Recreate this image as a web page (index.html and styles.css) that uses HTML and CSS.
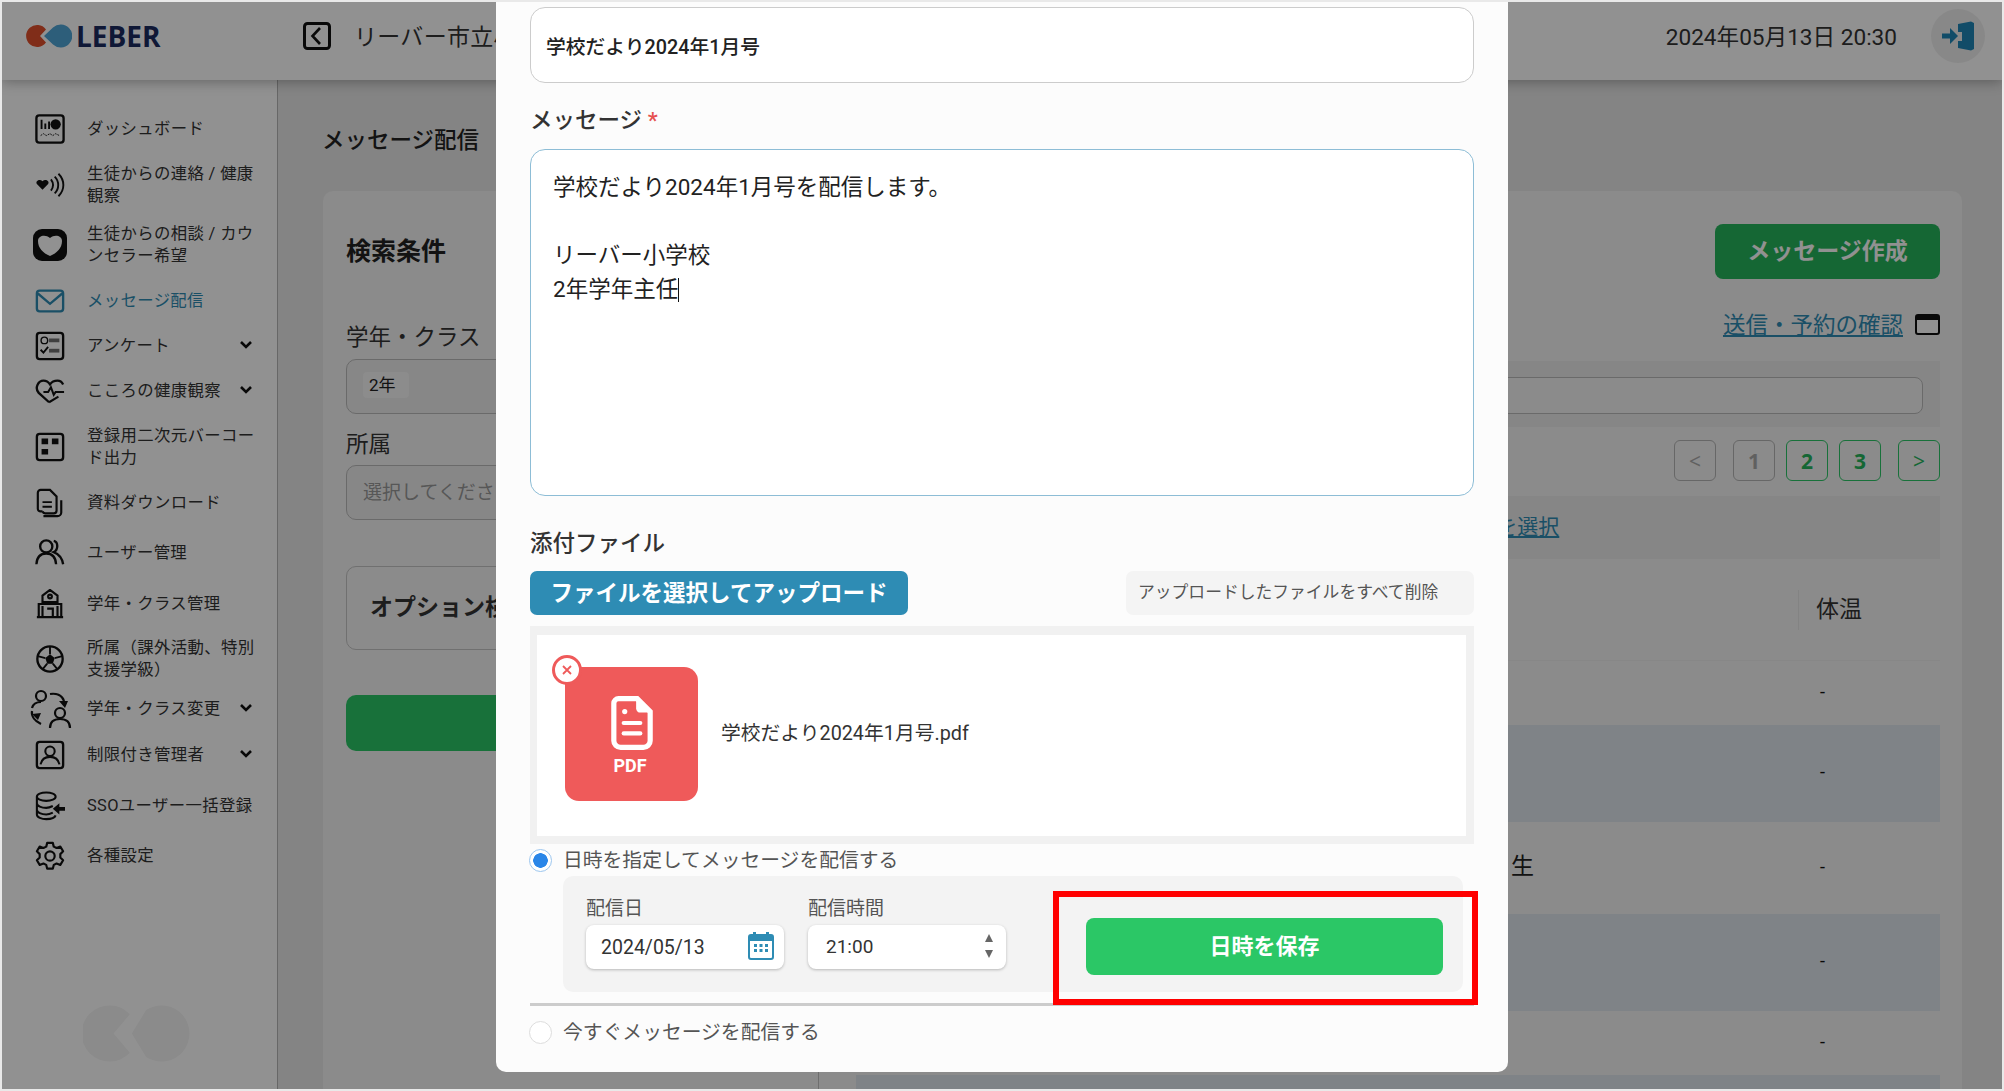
FILE: index.html
```html
<!DOCTYPE html>
<html lang="ja">
<head>
<meta charset="utf-8">
<title>メッセージ配信</title>
<link rel="stylesheet" href="styles.css">
</head>
<body>
<div class="app">
  <header class="topbar">
    <div class="brand">
      <svg class="brand-mark" viewBox="0 0 46 24"><path d="M20 5.500A11 11 0 1 0 20 18.500L14 12Z" fill="#e2502c"/><path d="M18 12 27 3.500A11.500 11.500 0 1 1 27 20.500Z" fill="#4fa5d6"/></svg>
      <span class="brand-name">LEBER</span>
    </div>
    <svg class="back-icon" viewBox="0 0 28 28"><rect x="1.500" y="1.500" width="25" height="25" rx="3" fill="none" stroke="#111" stroke-width="3"/><path d="M17 6 9.500 14 17 22" fill="none" stroke="#111" stroke-width="2.600"/></svg>
    <span class="school">リーバー市立小学校</span>
    <span class="clock">2024年05月13日 20:30</span>
    <span class="logout">
      <svg viewBox="0 0 32 30" width="32" height="30"><path d="M16 3 29 0.500 32 2V28L29 29.500 16 27V20H20V11H16Z" fill="#1f86b8"/><path d="M0 12.500H8V7L16 15 8 23V17.500H0Z" fill="#1f86b8"/></svg>
    </span>
  </header>

  <nav class="sidebar">
    <ul class="nav">
      <li class="nav-item"><svg class="nav-icon" viewBox="0 0 32 32"><rect x="1.500" y="1.500" width="29" height="29" rx="3" fill="none" stroke="#111" stroke-width="2.500"/><path d="M6 6h2v10H6zM10 10h2v6h-2zM14 8h2v8h-2z" fill="#111"/><circle cx="22" cy="11" r="5.500" fill="#111"/><path d="M6 23l3-2 3 2 4-2 3 2 3-2 4 2" fill="none" stroke="#111" stroke-dasharray="2 1"/></svg><span>ダッシュボード</span></li>
      <li class="nav-item two"><svg class="nav-icon" viewBox="0 0 32 32"><path d="M8 22 2 16c-2-3 3-6 6-3 3-3 8 0 6 3Z" fill="#111" transform="translate(0 -1)"/><path d="M17 10c3 4 3 8 0 12M21 7c5 5 5 13 0 18M25 4c7 7 7 17 0 24" fill="none" stroke="#111" stroke-width="2"/></svg><span>生徒からの連絡 / 健康<br>観察</span></li>
      <li class="nav-item two"><svg class="nav-icon wide" viewBox="0 0 34 32"><rect y="0" width="34" height="32" rx="9" fill="#111"/><path d="M17 27C10 24 5 19 5 12 5 7 12 5 17 9 22 5 29 7 29 12 29 19 24 24 17 27Z" fill="#fff"/></svg><span>生徒からの相談 / カウ<br>ンセラー希望</span></li>
      <li class="nav-item active"><svg class="nav-icon" viewBox="0 0 32 32"><rect x="2" y="5" width="28" height="22" rx="3" fill="none" stroke="#2e8cb4" stroke-width="2.500"/><path d="M3 8 16 19 29 8" fill="none" stroke="#2e8cb4" stroke-width="2.500"/></svg><span>メッセージ配信</span></li>
      <li class="nav-item"><svg class="nav-icon" viewBox="0 0 32 32"><rect x="2" y="2" width="28" height="28" rx="3" fill="none" stroke="#111" stroke-width="2.500"/><circle cx="10" cy="10" r="3.500" fill="none" stroke="#111" stroke-width="1.500"/><rect x="15" y="8" width="11" height="4" fill="#111" opacity=".6"/><path d="M6 20l3 3 5-6" fill="none" stroke="#111" stroke-width="2"/><rect x="15" y="19" width="11" height="4" fill="#111" opacity=".6"/></svg><span>アンケート</span><svg class="chev" viewBox="0 0 14 10"><path d="M2 2 7 7 12 2" fill="none" stroke="#111" stroke-width="2.600"/></svg></li>
      <li class="nav-item"><svg class="nav-icon" viewBox="0 0 32 32"><path d="M15 28 4 18C-1 12 4 5 9 5c3 0 5 1 7 4 2-3 5-4 8-4 3 0 5 2 6 4" fill="none" stroke="#111" stroke-width="2.500"/><path d="M9 17h5l3-5 3 8 2-3h9M25 22l-10 6" fill="none" stroke="#111" stroke-width="2.200"/></svg><span>こころの健康観察</span><svg class="chev" viewBox="0 0 14 10"><path d="M2 2 7 7 12 2" fill="none" stroke="#111" stroke-width="2.600"/></svg></li>
      <li class="nav-item two"><svg class="nav-icon" viewBox="0 0 32 32"><rect x="2" y="2" width="28" height="28" rx="3" fill="none" stroke="#111" stroke-width="2.500"/><path d="M7 7h7v6H7zM18 7h7v6h-7zM7 18h7v6H7z" fill="#111"/></svg><span>登録用二次元バーコー<br>ド出力</span></li>
      <li class="nav-item"><svg class="nav-icon" viewBox="0 0 32 32"><path d="M8 25H6a3 3 0 0 1-3-3V5a3 3 0 0 1 3-3h10l7 7v15a3 3 0 0 1-3 3H11a3 3 0 0 1-3-2" fill="none" stroke="#111" stroke-width="2.300"/><path d="M8 15h10M8 20h10" stroke="#111" stroke-width="2"/><path d="M9 30h15a4 4 0 0 0 4-4V13" fill="none" stroke="#111" stroke-width="2.300"/></svg><span>資料ダウンロード</span></li>
      <li class="nav-item"><svg class="nav-icon" viewBox="0 0 32 32"><circle cx="12" cy="9" r="6.500" fill="none" stroke="#111" stroke-width="2.500"/><path d="M1.500 28C2 20 6 16.500 12 16.500S22 20 22.500 28M20 3c5 1 5 10 0 12 5 2 9 6 10 13" fill="none" stroke="#111" stroke-width="2.500"/></svg><span>ユーザー管理</span></li>
      <li class="nav-item"><svg class="nav-icon" viewBox="0 0 32 32"><path d="M16 1 8 7V14H24V7ZM2 30H30M4 30V16H28V30M8 18V30M13 21H19V30M24 18V30M14 8a2 2 0 1 0 4 0 2 2 0 1 0-4 0" fill="none" stroke="#111" stroke-width="2.300"/></svg><span>学年・クラス管理</span></li>
      <li class="nav-item two"><svg class="nav-icon" viewBox="0 0 32 32"><circle cx="16" cy="16" r="13.500" fill="none" stroke="#111" stroke-width="2.500"/><path d="M16 11l5 4-2 6h-6l-2-6Z" fill="#111"/><path d="M16 3v8M3 13l8 2M29 13l-8 2M8 27l5-6M24 27l-5-6" stroke="#111" stroke-width="2"/></svg><span>所属（課外活動、特別<br>支援学級）</span></li>
      <li class="nav-item"><svg class="nav-icon large" viewBox="0 0 42 40"><circle cx="11" cy="7" r="5" fill="none" stroke="#111" stroke-width="2.200"/><path d="M2 19c1-4 4-6 9-6M2 22c-1 5 3 10 9 13" fill="none" stroke="#111" stroke-width="2.200"/><circle cx="30" cy="24" r="5" fill="none" stroke="#111" stroke-width="2.200"/><path d="M20 39c0-6 4-9 10-9s10 3 10 9M20 5c6-1 12 1 14 7" fill="none" stroke="#111" stroke-width="2.200"/><path d="M29 12h9l-3 7ZM2 25l9-1-3 7Z" fill="#111"/></svg><span>学年・クラス変更</span><svg class="chev" viewBox="0 0 14 10"><path d="M2 2 7 7 12 2" fill="none" stroke="#111" stroke-width="2.600"/></svg></li>
      <li class="nav-item"><svg class="nav-icon" viewBox="0 0 32 32"><rect x="2" y="2" width="28" height="28" rx="3" fill="none" stroke="#111" stroke-width="2.500"/><circle cx="16" cy="12" r="5" fill="none" stroke="#111" stroke-width="2.200"/><path d="M6 26c1-5 5-8 10-8s9 3 10 8" fill="none" stroke="#111" stroke-width="2.200"/></svg><span>制限付き管理者</span><svg class="chev" viewBox="0 0 14 10"><path d="M2 2 7 7 12 2" fill="none" stroke="#111" stroke-width="2.600"/></svg></li>
      <li class="nav-item"><svg class="nav-icon" viewBox="0 0 32 32"><ellipse cx="12" cy="6" rx="10" ry="4.500" fill="none" stroke="#111" stroke-width="2.200"/><path d="M2 6v19c0 3 5 5 10 5s9-1 10-4M2 13c0 3 5 5 10 5 3 0 5-1 7-2M2 20c0 3 5 5 10 5 3 0 5-1 7-2" fill="none" stroke="#111" stroke-width="2.200"/><path d="M32 17h-6v-4l-7 6 7 6v-4h6Z" fill="#111"/></svg><span>SSOユーザー一括登録</span></li>
      <li class="nav-item"><svg class="nav-icon" viewBox="0 0 32 32"><path d="M13 2h6l1 4 3 1.500 4-1.500 3 5-3 3v3.500l3 3-3 5-4-1.500-3 1.500-1 4h-6l-1-4-3-1.500-4 1.500-3-5 3-3V14l-3-3 3-5 4 1.500L12 6Z" fill="none" stroke="#111" stroke-width="2.300" stroke-linejoin="round"/><circle cx="16" cy="16" r="5" fill="none" stroke="#111" stroke-width="2.300"/></svg><span>各種設定</span></li>
    </ul>
    <svg class="watermark" viewBox="0 0 110 56"><path d="M46 9A27.500 27.500 0 1 0 46 47L30 28Z" fill="#f4f4f4"/><path d="M48 28 62 5A27.500 27.500 0 1 1 62 51Z" fill="#f4f4f4"/></svg>
  </nav>

  <main class="main">
    <h1 class="page-title">メッセージ配信</h1>
    <section class="card">
      <div class="search">
        <h2 class="search-title">検索条件</h2>
        <div class="field-label first">学年・クラス</div>
        <div class="select"><span class="tag">2年</span></div>
        <div class="field-label">所属</div>
        <div class="select select-near"><span class="placeholder">選択してください</span></div>
        <div class="option-box">オプション検索</div>
        <div class="search-btn"></div>
      </div>
      <div class="results">
        <div class="create-btn">メッセージ作成</div>
        <div class="link-row">
          <a class="link">送信・予約の確認</a>
          <svg class="window-icon" viewBox="0 0 25 21"><rect x="1" y="1" width="23" height="19" rx="2" fill="#fff" stroke="#111" stroke-width="2"/><rect x="1" y="1" width="23" height="5" fill="#111"/></svg>
        </div>
        <div class="band band-search"><div class="search-input"></div></div>
        <div class="pager">
          <span class="page off">&lt;</span>
          <span class="page off num first-num">1</span>
          <span class="page on num">2</span>
          <span class="page on num">3</span>
          <span class="page on next">&gt;</span>
        </div>
        <div class="band band-select"><a class="link select-all">すべてを選択</a></div>
        <div class="thead"><span class="th-sep"></span><span class="th">体温</span></div>
        <div class="row r1"><span class="dash">-</span></div>
        <div class="row r2 tint"><span class="dash">-</span></div>
        <div class="row r3"><span class="name">生</span><span class="dash">-</span></div>
        <div class="row r2 tint"><span class="dash">-</span></div>
        <div class="row r5"><span class="dash">-</span></div>
        <div class="row r6 tint"></div>
      </div>
    </section>
  </main>

  <div class="overlay"></div>

  <div class="modal">
    <div class="title-input">学校だより2024年1月号</div>
    <div class="modal-label msg-label">メッセージ <span class="req">*</span></div>
    <div class="textarea">
      <div>学校だより2024年1月号を配信します。</div>
      <div>&nbsp;</div>
      <div>リーバー小学校</div>
      <div>2年学年主任<span class="caret"></span></div>
    </div>
    <div class="modal-label attach-label">添付ファイル</div>
    <div class="attach-row">
      <span class="upload-btn">ファイルを選択してアップロード</span>
      <span class="clear-btn">アップロードしたファイルをすべて削除</span>
    </div>
    <div class="file-box">
      <div class="file-inner">
        <div class="tile">
          <span class="remove"><svg viewBox="0 0 12 12" width="12" height="12"><path d="M2 2 10 10M10 2 2 10" stroke="#ef5a5a" stroke-width="1.800"/></svg></span>
          <svg class="doc" viewBox="0 0 40 52"><path d="M7 2.500H25L37.500 15V43A6.500 6.500 0 0 1 31 49.500H9A6.500 6.500 0 0 1 2.500 43V7A4.500 4.500 0 0 1 7 2.500Z" fill="none" stroke="#fff" stroke-width="5"/><path d="M24 3 37 16H28a4 4 0 0 1-4-4Z" fill="#fff"/><circle cx="13" cy="15" r="2.500" fill="#fff"/><rect x="10" y="24" width="20" height="4" rx="2" fill="#fff"/><rect x="10" y="34" width="20" height="4" rx="2" fill="#fff"/></svg>
          <span class="pdf">PDF</span>
        </div>
        <span class="file-name">学校だより2024年1月号.pdf</span>
      </div>
    </div>
    <div class="radio-row first-radio"><span class="radio checked"></span><span>日時を指定してメッセージを配信する</span></div>
    <div class="schedule">
      <div class="sched-field">
        <div class="sched-label">配信日</div>
        <div class="sched-input">
          <span>2024/05/13</span>
          <svg class="cal" viewBox="0 0 26 28"><path d="M5 0h3v4H5zM18 0h3v4h-3z" fill="#2e8cb4"/><rect x="1" y="3" width="24" height="24" rx="2" fill="#fff" stroke="#2e8cb4" stroke-width="2"/><rect x="1" y="3" width="24" height="6" fill="#2e8cb4"/><path d="M6 12h3v3H6zM11.500 12h3v3h-3zM17 12h3v3h-3zM6 17h3v3H6zM11.500 17h3v3h-3zM17 17h3v3h-3z" fill="#2e8cb4"/></svg>
        </div>
      </div>
      <div class="sched-field">
        <div class="sched-label">配信時間</div>
        <div class="sched-input time">
          <span>21:00</span>
          <span class="spin"><i class="up"></i><i class="down"></i></span>
        </div>
      </div>
      <div class="save-btn">日時を保存</div>
    </div>
    <div class="divider"></div>
    <div class="radio-row second-radio"><span class="radio"></span><span>今すぐメッセージを配信する</span></div>
    <div class="highlight"></div>
  </div>
</div>
</body>
</html>
```

FILE: styles.css
```css
* { box-sizing: border-box; }
html, body { margin: 0; height: 100%; }
body {
  background: #e9e9e9;
  padding: 2px;
  font-family: Roboto, "Noto Sans CJK JP", "Noto Sans", sans-serif;
  color: #222;
  overflow: hidden;
}
.app {
  position: relative;
  width: 2000px;
  height: 1087px;
  overflow: hidden;
  display: grid;
  grid-template-columns: 276px 1fr;
  grid-template-rows: 78px 1fr;
  background: #e8e8e8;
}

/* top bar */
.topbar {
  grid-column: 1 / 3;
  position: relative;
  z-index: 1;
  display: flex;
  align-items: center;
  background: #fff;
  box-shadow: 0 2px 12px rgba(0,0,0,.3);
  padding: 0 0 10px 24px;
}
.brand { display: flex; align-items: center; width: 277px; gap: 4px; }
.brand-mark { width: 46px; height: 24px; }
.brand-name { font: 700 28px "Open Sans", sans-serif; color: #1b2b60; }
.back-icon { width: 28px; height: 28px; }
.school { margin: 0 0 2px 23px; font-size: 23px; color: #333; letter-spacing: .3px; }
.clock { margin: 0 -1px 2px auto; font-size: 22.600px; color: #333; }
.logout {
  margin: 0 17px 0 35px;
  width: 54px; height: 54px;
  border-radius: 50%;
  background: #f0f0f0;
  display: flex; align-items: center; justify-content: center;
}

/* sidebar */
.sidebar {
  background: #fff;
  border-right: 1px solid #b5b5b5;
  display: flex;
  flex-direction: column;
  padding: 35px 0 27px 32px;
}
.nav { list-style: none; margin: 0; padding: 0; display: flex; flex-direction: column; }
.nav-item {
  height: 28px;
  display: flex;
  align-items: center;
  position: relative;
  font-size: 16.400px;
  line-height: 22.500px;
  letter-spacing: .35px;
  color: #333;
  white-space: nowrap;
  padding-left: 53px;
}
.nav-item.two { height: 44px; }
.nav-item.active { color: #2e8cb4; }
.nav-icon { position: absolute; left: 1px; top: 50%; width: 30px; height: 30px; margin-top: -15px; }
.nav-icon.wide { left: -1px; width: 34px; height: 32px; margin-top: -16px; }
.nav-icon.large { left: -4px; width: 42px; height: 40px; margin-top: -20px; }
.chev { position: absolute; left: 205px; top: 50%; width: 14px; height: 10px; margin-top: -6px; }
.nav-item:nth-child(2), .nav-item:nth-child(4), .nav-item:nth-child(7), .nav-item:nth-child(8) { margin-top: 20px; }
.nav-item:nth-child(3) { margin-top: 16px; }
.nav-item:nth-child(5), .nav-item:nth-child(6) { margin-top: 17px; }
.nav-item:nth-child(9), .nav-item:nth-child(15) { margin-top: 22px; }
.nav-item:nth-child(10), .nav-item:nth-child(14) { margin-top: 23px; }
.nav-item:nth-child(11) { margin-top: 19px; }
.nav-item:nth-child(12) { margin-top: 14px; }
.nav-item:nth-child(13) { margin-top: 18px; }
.watermark { margin-top: auto; margin-left: 49px; width: 112px; height: 57px; }

/* main */
.main { padding: 0 40px 0 45px; display: flex; flex-direction: column; overflow: hidden; }
.page-title { margin: 42px 0 0 -1px; height: 36px; font-size: 22.500px; line-height: 36px; font-weight: 500; color: #222; }
.card {
  flex: 1;
  margin-top: 33px;
  background: #f4f4f4;
  border-radius: 10px 10px 0 0;
  display: flex;
}
.search { width: 496px; padding: 43px 23px 0; border-right: 1px solid #c2c2c2; }
.search-title { margin: 0; height: 36px; line-height: 36px; font-size: 25px; font-weight: 700; color: #222; }
.field-label { margin-top: 15px; height: 30px; line-height: 30px; font-size: 22.500px; color: #333; }
.field-label.first { margin-top: 52px; }
.select {
  margin-top: 7px;
  height: 55px;
  border: 1px solid #bbb;
  border-radius: 10px;
  background: #eee;
  display: flex; align-items: center;
  padding: 0 0 4px 16px;
}
.select-near { margin-top: 6px; }
.tag { background: #f6f6f6; border-radius: 4px; padding: 1px 13px 1px 6px; font-size: 17px; line-height: 24px; }
.placeholder { font-size: 19px; color: #999; }
.option-box {
  margin-top: 46px;
  height: 84px;
  border: 1px solid #c5c5c5;
  border-radius: 10px;
  padding: 0 0 6px 23px;
  display: flex; align-items: center;
  font-size: 23px; font-weight: 700; color: #333;
}
.search-btn { margin-top: 45px; height: 56px; border-radius: 10px; background: #2bc766; }

.results { flex: 1; margin: 0 22px 0 37px; display: flex; flex-direction: column; align-items: stretch; }
.create-btn {
  margin: 33px 0 0 auto;
  width: 225px; height: 55px;
  border-radius: 8px;
  background: #26b55c;
  color: #fff;
  display: flex; align-items: center; justify-content: center;
  padding-bottom: 5px;
  font: 700 23px "Noto Sans CJK JP", sans-serif;
}
.link-row { margin-top: 30px; height: 28px; display: flex; justify-content: flex-end; align-items: center; gap: 12px; }
.link { color: #2e8cb4; text-decoration: underline; font-size: 22.500px; }
.window-icon { width: 25px; height: 21px; margin-top: 2px; }
.band { background: #ebebeb; }
.band-search { margin-top: 24px; height: 66px; padding: 16px 17px 0 0; }
.search-input { height: 37px; background: #f4f4f4; border: 1px solid #bbb; border-radius: 8px; }
.pager { margin-top: 13px; height: 41px; display: flex; justify-content: flex-end; gap: 11px; }
.page {
  width: 42px; height: 41px;
  border-radius: 6px;
  display: flex; align-items: center; justify-content: center;
  font: 700 21px "Open Sans", sans-serif;
}
.page.off { border: 1px solid #b5b5b5; color: #aaa; font-weight: 400; }
.page.on { border: 1.500px solid #2bc766; color: #26b55c; }
.page.num.off { font-weight: 700; }
.first-num { margin-left: 6px; }
.page.next { margin-left: 6px; font-weight: 400; }
.band-select { margin-top: 15px; height: 63px; padding: 0 0 5px 580px; display: flex; align-items: center; font-size: 21px; }
.select-all { font-size: 21px; }
.thead { height: 102px; position: relative; display: flex; align-items: center; padding: 0 0 6px 960px; border-bottom: 1px solid #eee; }
.th { font-size: 23px; color: #333; }
.th-sep { position: absolute; left: 942px; top: 31px; width: 1px; height: 40px; background: #e6e6e6; }
.row { display: flex; align-items: center; font-size: 23px; padding-bottom: 4px; }
.dash { margin-left: auto; width: 120px; font-size: 18px; color: #111; }
.name { margin: 0 0 4px 655px; color: #222; }
.tint { background: #e0e7ed; }
.r1 { height: 64px; }
.r2 { height: 97px; }
.r3 { height: 92px; }
.r5 { height: 64px; }
.r6 { flex: 1; }

.overlay { position: absolute; inset: 0; z-index: 2; background: rgba(0,0,0,.43); }

/* modal */
.modal {
  position: absolute;
  z-index: 3;
  left: 494px;
  top: -2px;
  width: 1012px;
  height: 1072px;
  padding: 7px 34px 0;
  background: #fcfcfc;
  border-radius: 0 0 10px 10px;
  font-family: Roboto, "Noto Sans CJK JP", sans-serif;
}
.title-input {
  height: 76px;
  background: #fff;
  border: 1.500px solid #ccc;
  border-radius: 15px;
  display: flex; align-items: center;
  padding-left: 15px;
  font-size: 19.800px; font-weight: 500; color: #222;
}
.modal-label { height: 30px; line-height: 30px; font-size: 22.500px; font-weight: 500; color: #333; }
.msg-label { margin-top: 22px; }
.req { color: #e65050; }
.textarea {
  margin-top: 14px;
  height: 347px;
  background: #fff;
  border: 1.500px solid #8dbdd6;
  border-radius: 15px;
  padding: 20px 22px;
  font-size: 22.500px;
  line-height: 34px;
  color: #222;
}
.caret { display: inline-block; width: 1px; height: 24px; background: #111; vertical-align: -5px; }
.attach-label { margin-top: 32px; }
.attach-row { margin-top: 13px; height: 44px; display: flex; justify-content: space-between; }
.upload-btn {
  width: 378px;
  background: #2e8cb4;
  border-radius: 7px;
  color: #fff;
  font-size: 22.500px; font-weight: 700;
  display: flex; align-items: center; justify-content: center;
  padding-bottom: 4px;
}
.clear-btn {
  width: 348px;
  background: #f4f4f4;
  border-radius: 7px;
  color: #555;
  font-size: 16.800px;
  display: flex; align-items: center;
  padding: 0 0 5px 12px;
}
.file-box { margin-top: 11px; height: 218px; background: #f1f1f1; padding: 9px 8px 8px 7px; }
.file-inner { height: 100%; background: #fff; display: flex; align-items: center; padding-left: 28px; }
.tile {
  position: relative;
  width: 133px; height: 134px;
  border-radius: 14px;
  background: #ef5a5a;
  display: flex; flex-direction: column; align-items: center;
  margin-top: -4px;
  padding-top: 29px;
}
.remove {
  position: absolute;
  left: -13px; top: -12px;
  width: 30px; height: 30px;
  border-radius: 50%;
  background: #fff;
  border: 3px solid #ef5a5a;
  display: flex; align-items: center; justify-content: center;
}
.doc { width: 42px; height: 54px; }
.pdf { margin: 3px 3px 0 0; color: #fff; font-size: 18px; font-weight: 700; line-height: 26px; }
.file-name { margin: -9px 0 0 23px; font-size: 19.800px; color: #333; }
.radio-row { height: 26px; display: flex; align-items: center; gap: 11px; font-size: 19.800px; color: #555; padding-bottom: 4px; }
.radio-row .radio { margin: 4px 0 0 -1px; }
.first-radio { margin-top: 3px; }
.second-radio { margin-top: 13px; }
.radio { width: 23px; height: 23px; border-radius: 50%; border: 1.500px solid #ddd; background: #fff; flex: none; }
.radio.checked { border-color: #9cc6ef; background: radial-gradient(circle, #2a86e8 0 7px, #fff 7.500px); }
.schedule {
  margin: 3px 11px 0 33px;
  height: 116px;
  background: #f3f3f3;
  border-radius: 10px;
  padding: 21px 0 0 23px;
  display: flex;
  align-items: flex-start;
  gap: 24px;
}
.sched-field { width: 198px; }
.sched-label { height: 24px; line-height: 24px; font-size: 19px; color: #555; }
.sched-input {
  position: relative;
  margin-top: 4px;
  height: 44px;
  background: #fff;
  border-radius: 8px;
  box-shadow: 0 1px 3px rgba(0,0,0,.25);
  display: flex; align-items: center;
  padding-left: 15px;
  font-size: 19.500px;
  color: #333;
}
.sched-input.time { padding: 0 0 2px 18px; font-size: 19px; }
.cal { position: absolute; right: 10px; top: 7px; width: 26px; height: 28px; }
.spin { position: absolute; right: 13px; top: 9px; display: flex; flex-direction: column; gap: 8px; }
.spin i { display: block; width: 0; height: 0; border-left: 4.500px solid transparent; border-right: 4.500px solid transparent; }
.spin .up { border-bottom: 8px solid #666; }
.spin .down { border-top: 8px solid #666; }
.save-btn {
  margin: 21px 0 0 56px;
  width: 357px; height: 57px;
  background: #2bc766;
  border-radius: 8px;
  color: #fff;
  font-size: 22px; font-weight: 700;
  display: flex; align-items: center; justify-content: center;
  padding-bottom: 5px;
}
.divider { margin-top: 11px; height: 3px; background: #ccc; }
.highlight {
  position: absolute;
  left: 557px; top: 891px;
  width: 425px; height: 114px;
  border: 6px solid #f00;
}
```
